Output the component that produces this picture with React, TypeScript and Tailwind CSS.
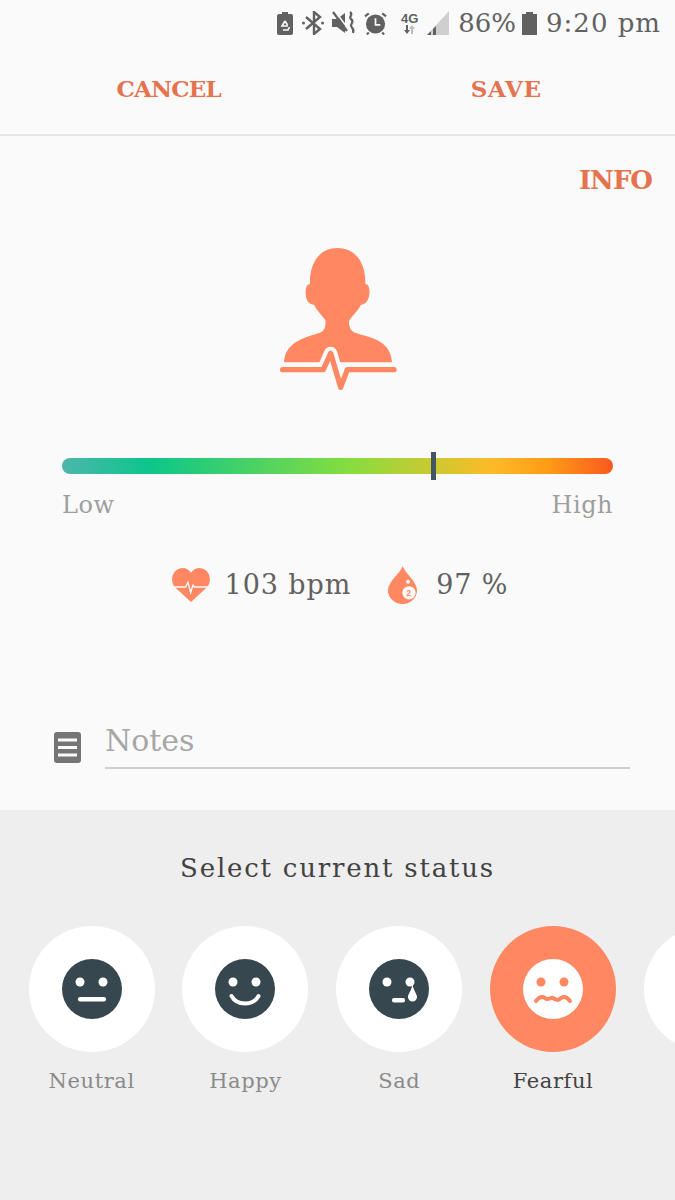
import React from 'react';

const SERIF = "font-['DejaVu_Serif','Liberation_Serif',serif]";

function StatusIcons() {
  return (
    <>
      <svg width="16" height="23" viewBox="0 0 16 23" className="text-[#616161]">
        <path fill="currentColor" d="M5 0h6v2h3a2 2 0 0 1 2 2v17a2 2 0 0 1-2 2H2a2 2 0 0 1-2-2V4a2 2 0 0 1 2-2h3z" />
        <path fill="none" stroke="#fafafa" strokeWidth="1.6" d="M8 9l-3 5h6M6 18h5l1.5-3M8 9l2.5 4" />
      </svg>
      <svg width="22" height="24" viewBox="0 0 22 24" className="ml-[9px] text-[#616161]">
        <path fill="none" stroke="currentColor" strokeWidth="2.4" d="M4 6l14 12-6 5V1l6 5L4 18" />
        <circle cx="1.5" cy="12" r="1.5" fill="currentColor" />
        <circle cx="20.5" cy="12" r="1.5" fill="currentColor" />
      </svg>
      <svg width="24" height="24" viewBox="0 0 24 24" className="ml-[8px] text-[#616161]">
        <path fill="currentColor" d="M0 8h5l8-6v20l-8-6H0z" />
        <path fill="none" stroke="#fafafa" strokeWidth="1.6" d="M3 0l14 19" />
        <path fill="none" stroke="currentColor" strokeWidth="2.2" d="M1 1l14 19" />
        <path fill="none" stroke="currentColor" strokeWidth="2.2" d="M18 1c4 3-2 5 1 7s1 4 0 6 4 3 2 8" />
      </svg>
      <svg width="23" height="24" viewBox="0 0 24 24" className="ml-[8px] text-[#616161]">
        <circle cx="12" cy="13" r="10" fill="currentColor" />
        <path fill="none" stroke="#fafafa" strokeWidth="1.8" d="M12 7v7h5" />
        <path fill="none" stroke="currentColor" strokeWidth="2.2" d="M1 5l4-3M23 5l-4-3M5 22l-2 2M19 22l2 2" />
      </svg>
      <div className="ml-[13px] flex w-[19px] flex-col items-center font-['Liberation_Sans',sans-serif] text-[13px] font-bold leading-[13px] text-[#616161]">
        <span>4G</span>
        <svg width="14" height="9" viewBox="0 0 14 9">
          <path fill="#616161" d="M3 0h2v5h2L4 9 1 5h2z" />
          <path fill="#bdbdbd" d="M10 9h-2V4H6l3-4 3 4h-2z" />
        </svg>
      </div>
      <svg width="22" height="24" viewBox="0 0 22 24" className="ml-[8px]">
        <path fill="#cfcfcf" d="M22 0v24H0z" />
        <path fill="#616161" d="M0 24l4-4v4zM6 18l3-3v9H6z" />
      </svg>
    </>
  );
}

function PersonIcon() {
  return (
    <svg width="160" height="165" viewBox="0 0 480 495">
      <path
        fill="#ff8862"
        d="M150 150C148 85 180 42 232 42C285 42 318 85 316 150C326 150 330 165 328 180C326 200 316 212 303 212C295 228 280 242 268 258C265 275 270 290 285 296C325 310 392 315 396 385H72C76 320 140 310 180 296C195 290 198 275 196 258C184 242 170 228 162 212C148 212 138 200 137 180C136 165 140 150 150 150Z"
      />
      <path
        fill="none"
        stroke="#fafafa"
        strokeWidth="40"
        strokeLinejoin="round"
        d="M190 407L212 358L242 460L262 407"
      />
      <path
        fill="none"
        stroke="#ff8862"
        strokeWidth="16"
        strokeLinecap="round"
        strokeLinejoin="round"
        d="M68 407H190L212 358L242 460L262 407H402"
      />
    </svg>
  );
}

function HeartIcon() {
  return (
    <svg width="38" height="34" viewBox="0 0 112 100">
      <path
        fill="#ff8862"
        d="M56 100L8 56C-8 36 2 2 30 0C42 0 50 6 56 14C62 6 70 0 82 0C110 2 120 36 104 56Z"
      />
      <path
        fill="none"
        stroke="#fafafa"
        strokeWidth="4"
        d="M0 56H40L47 42L55 72L62 50L66 56H112"
      />
    </svg>
  );
}

function DropIcon() {
  return (
    <svg width="29" height="38" viewBox="0 0 87 113">
      <path fill="#ff8862" d="M44 0C52 22 87 46 87 72A43 41 0 0 1 0 72C0 46 36 22 44 0Z" />
      <circle cx="60" cy="47" r="6" fill="#fafafa" />
      <circle cx="63" cy="80" r="20" fill="#fafafa" />
      <text x="63" y="89" textAnchor="middle" fontSize="25" fontWeight="700" fill="#ff8862" fontFamily="Liberation Sans, sans-serif">2</text>
    </svg>
  );
}

function Face({ mood, dark }: { mood: string; dark: boolean }) {
  const bg = dark ? '#37474f' : '#ffffff';
  const fg = dark ? '#ffffff' : '#ff8862';
  return (
    <svg width="60" height="60" viewBox="0 0 60 60">
      <circle cx="30" cy="30" r="30" fill={bg} />
      <circle cx="18" cy="23" r="4.5" fill={fg} />
      <circle cx="41" cy="23" r="4.5" fill={fg} />
      {mood === 'Neutral' && <rect x="16" y="38" width="28" height="4.5" rx="2" fill={fg} />}
      {mood === 'Happy' && (
        <path d="M16.5 37C22 47 38 47 43.5 37" fill="none" stroke={fg} strokeWidth="4" strokeLinecap="round" />
      )}
      {mood === 'Sad' && (
        <>
          <rect x="23" y="39" width="13" height="4.5" rx="2" fill={fg} />
          <path d="M43.5 26C45 32 48 35 48 38A4.5 4.5 0 0 1 39 38C39 35 42 32 43.5 26Z" fill={fg} />
        </>
      )}
      {mood === 'Fearful' && (
        <path
          d="M13 42C16 38 19 37 22 39C25 42 27 38 30 39C33 41 35 42 38 39C41 37 44 38 47 42"
          fill="none"
          stroke={fg}
          strokeWidth="4"
          strokeLinecap="round"
        />
      )}
    </svg>
  );
}

const moods = ['Neutral', 'Happy', 'Sad', 'Fearful'];

export default function App() {
  return (
    <div className={`flex h-[1200px] w-[675px] flex-col overflow-hidden bg-[#fafafa] ${SERIF}`}>
      <header className="h-[136px] shrink-0 border-b-2 border-[#e4e4e4]">
        <div className="flex h-[45px] items-center justify-end pr-[14px] pt-[1px]">
          <StatusIcons />
          <span className="ml-[9px] text-[26px] leading-none text-[#616161]">86%</span>
          <svg width="15" height="23" viewBox="0 0 15 23" className="ml-[6px]">
            <path fill="#616161" d="M4 0h7v2h4v21H0V2h4z" />
          </svg>
          <span className="ml-[9px] text-[26px] leading-none tracking-[1px] text-[#616161]">9:20 pm</span>
        </div>
        <div className="flex h-[89px] items-center">
          <button className="flex-1 text-center text-[23px] font-bold tracking-[-0.8px] text-[#e57350]">CANCEL</button>
          <button className="flex-1 text-center text-[23px] font-bold tracking-[0.7px] text-[#e57350]">SAVE</button>
        </div>
      </header>

      <main className="flex h-[674px] shrink-0 flex-col">
        <div className="flex h-[98px] justify-end pr-[23px] pt-[24px]">
          <span className="text-[26px] font-bold leading-[40px] tracking-[-1px] text-[#e57350]">INFO</span>
        </div>
        <div className="flex justify-center pl-[4px]">
          <PersonIcon />
        </div>
        <div className="relative mx-[62px] mt-[59px] h-[16px] rounded-full bg-[linear-gradient(90deg,#4db6ac_0%,#0cc68b_16%,#85dd40_52%,#fdbb27_78%,#ff9c17_88%,#f9591f_100%)]">
          <div className="absolute left-[369px] top-[-6px] h-[28px] w-[5px] bg-[#425563]" />
        </div>
        <div className="mx-[62px] mt-[15px] flex justify-between text-[24px] leading-[32px] tracking-[0.5px] text-[#9e9e9e]">
          <span>Low</span>
          <span>High</span>
        </div>
        <div className="mt-[44px] flex h-[40px] items-center justify-center pl-[5px] text-[27px] tracking-[0.9px] text-[#616161]">
          <HeartIcon />
          <span className="ml-[15px]">103 bpm</span>
          <span className="ml-[37px] flex"><DropIcon /></span>
          <span className="ml-[19px]">97 %</span>
        </div>
        <div className="ml-[54px] mt-[116px] flex items-center">
          <svg width="27" height="31" viewBox="0 0 27 31" className="mt-[5px]">
            <rect width="27" height="31" rx="3" fill="#757575" />
            <path d="M4 8h19M4 15.5h19M4 23h19" stroke="#fafafa" strokeWidth="3" />
          </svg>
          <div className="ml-[24px] w-[525px] border-b-2 border-[#d0d0d0] pb-[6px] text-[30px] leading-[40px] text-[#a6a6a6]">
            Notes
          </div>
        </div>
      </main>

      <section className="flex-1 bg-[#eeeeee]">
        <h2 className="mt-[38px] text-center text-[26px] font-normal leading-[40px] tracking-[1.8px] text-[#424242]">
          Select current status
        </h2>
        <div className="mt-[38px] flex gap-[27.8px] pl-[28.7px]">
          {moods.map((mood) => {
            const active = mood === 'Fearful';
            return (
              <div key={mood} className="flex w-[126px] shrink-0 flex-col items-center">
                <div className={`flex h-[126px] w-[126px] items-center justify-center rounded-full ${active ? 'bg-[#ff8862]' : 'bg-white'}`}>
                  <Face mood={mood} dark={!active} />
                </div>
                <span className={`mt-[14px] text-[21px] leading-[30px] tracking-[0.6px] ${active ? 'text-[#424242]' : 'text-[#8a8a8a]'}`}>{mood}</span>
              </div>
            );
          })}
          <div className="h-[126px] w-[126px] shrink-0 rounded-full bg-white" />
        </div>
      </section>
    </div>
  );
}
